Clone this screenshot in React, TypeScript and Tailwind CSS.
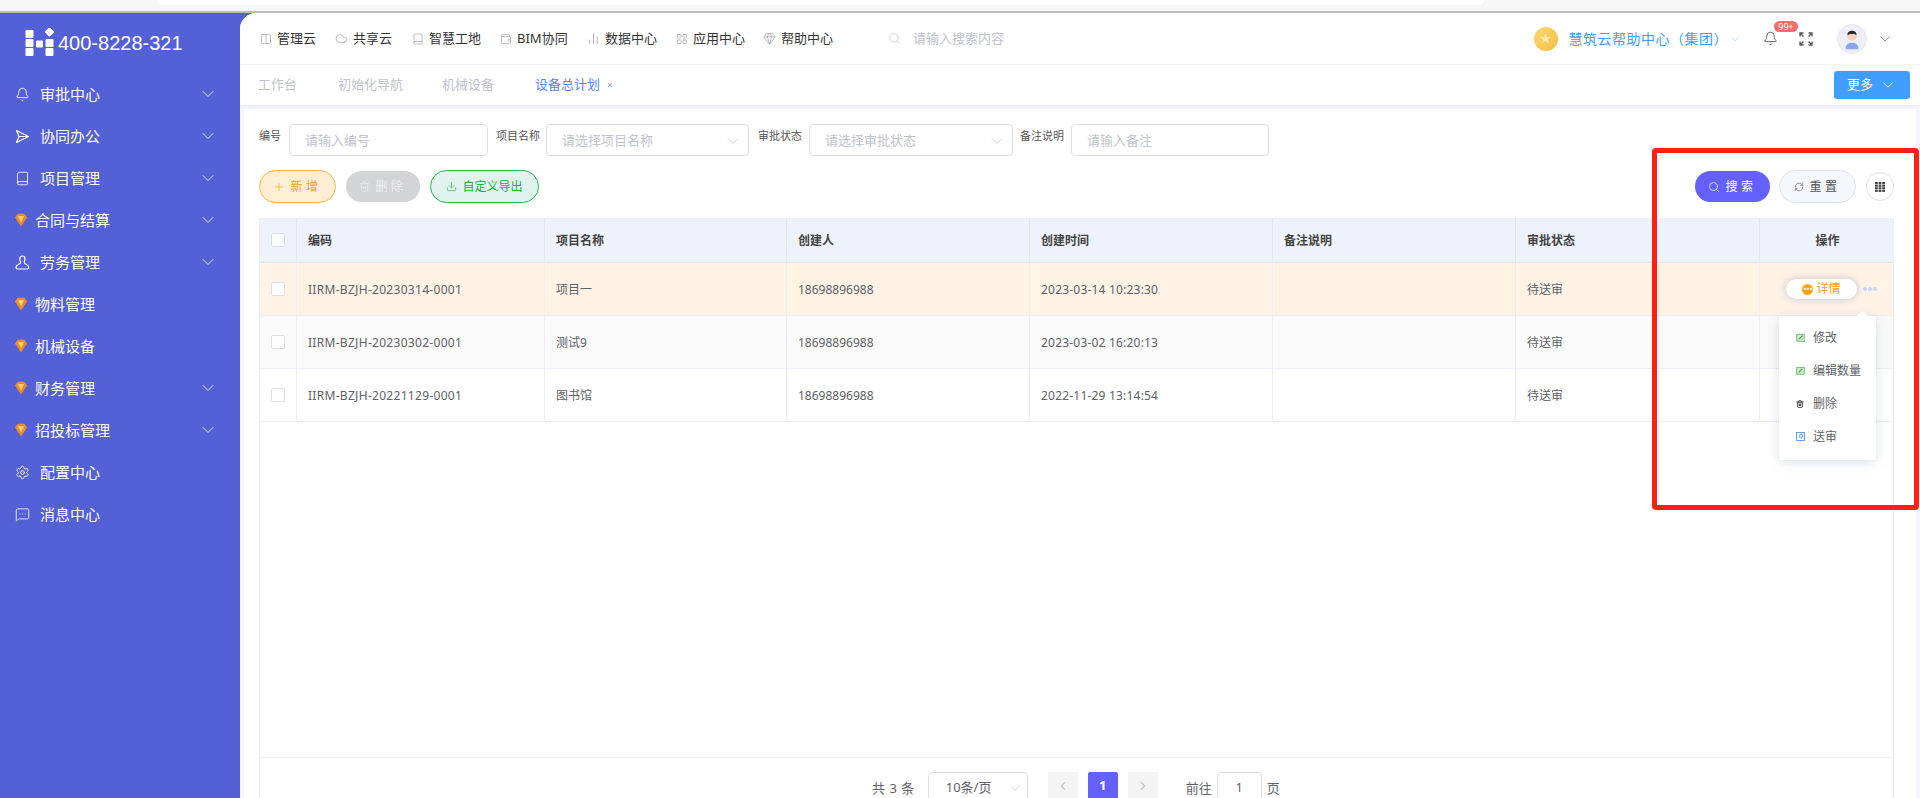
import {
  Bell,
  Book,
  ChartNoAxesColumn,
  ChevronDown,
  ChevronLeft,
  ChevronRight,
  Cloud,
  Columns2,
  Download,
  Gem,
  LayoutGrid,
  MessageSquareMore,
  Plus,
  RefreshCw,
  Search,
  Settings,
  Trash2,
  Wallet,
} from "lucide-react";
import type { ReactNode } from "react";

const FONT = "font-['Noto_Sans','Noto_Sans_CJK_SC',sans-serif]";

function GemDot() {
  return (
    <svg viewBox="0 0 12 14" className="h-[14px] w-[12px] shrink-0">
      <path d="M2.6 0.8h6.8L12 4.6 6 13.6 0 4.6z" fill="#f5882a" />
      <path d="M3 3h6L6 9.6z" fill="#ffd768" />
    </svg>
  );
}

function Logo() {
  return (
    <svg viewBox="0 0 30 30" className="h-[30px] w-[30px] shrink-0" fill="#fff">
      <rect x="0.5" y="2" width="8" height="8" rx="1" />
      <rect x="0.5" y="11" width="8" height="8" rx="1" />
      <rect x="0.5" y="20" width="8" height="8" rx="1" />
      <rect x="11" y="12.5" width="7" height="7" rx="1" />
      <rect x="20.5" y="11" width="8" height="8" rx="1" />
      <rect x="20.5" y="20" width="8" height="8" rx="1" />
      <rect x="21" y="0.5" width="7" height="7" rx="1" transform="rotate(45 24.5 4)" />
    </svg>
  );
}

function PlaneIcon() {
  return (
    <svg viewBox="0 0 15 15" className="h-[15px] w-[15px]" fill="none" stroke="currentColor" strokeWidth="1.2" strokeLinejoin="round">
      <path d="M1.500 1.500L13.500 7.500L1.500 13.500L4 7.500ZM4 7.500H13.500" />
    </svg>
  );
}

function WorkerIcon() {
  return (
    <svg viewBox="0 0 15 15" className="h-[15px] w-[15px]" fill="none" stroke="currentColor" strokeWidth="1.2" strokeLinejoin="round">
      <path d="M4.800 3.800C4.800 2 6 1 7.400 1S10 2 10 3.800C10 5.500 9.200 6.400 9.200 7.600C9.200 9 13.800 9.600 13.800 12.200C13.800 13.300 13 14 12 14H2.800C1.800 14 1 13.300 1 12.200C1 9.600 5.600 9 5.600 7.600C5.600 6.400 4.800 5.500 4.800 3.800Z" />
    </svg>
  );
}

const menu: { label: string; icon: ReactNode; gem?: boolean; arrow?: boolean }[] = [
  { label: "审批中心", icon: <Bell size={15} strokeWidth={1.3} />, arrow: true },
  { label: "协同办公", icon: <PlaneIcon />, arrow: true },
  { label: "项目管理", icon: <Book size={15} strokeWidth={1.3} />, arrow: true },
  { label: "合同与结算", icon: <GemDot />, gem: true, arrow: true },
  { label: "劳务管理", icon: <WorkerIcon />, arrow: true },
  { label: "物料管理", icon: <GemDot />, gem: true },
  { label: "机械设备", icon: <GemDot />, gem: true },
  { label: "财务管理", icon: <GemDot />, gem: true, arrow: true },
  { label: "招投标管理", icon: <GemDot />, gem: true, arrow: true },
  { label: "配置中心", icon: <Settings size={15} strokeWidth={1.3} /> },
  { label: "消息中心", icon: <MessageSquareMore size={15} strokeWidth={1.3} /> },
];

function Sidebar() {
  return (
    <aside className="w-[240px] shrink-0 text-white">
      <div className="flex h-[60px] items-center pl-[25px]">
        <Logo />
        <span className="ml-[3px] font-['Liberation_Sans',sans-serif] text-[20px]">400-8228-321</span>
      </div>
      <nav>
        {menu.map((m) => (
          <div key={m.label} className="flex h-[42px] items-center pl-[15px] pr-[22px] text-[15px]">
            <span className={`flex justify-start ${m.gem ? "w-[20px]" : "w-[25px]"}`}>{m.icon}</span>
            <span className="flex-1">{m.label}</span>
            {m.arrow ? <ChevronDown size={20} strokeWidth={1} /> : null}
          </div>
        ))}
      </nav>
    </aside>
  );
}

const topLinks: { label: string; icon: ReactNode; width: string }[] = [
  { label: "管理云", icon: <Columns2 size={12} strokeWidth={1.2} />, width: "w-[75px]" },
  { label: "共享云", icon: <Cloud size={13} strokeWidth={1.2} />, width: "w-[77px]" },
  { label: "智慧工地", icon: <Book size={12} strokeWidth={1.2} />, width: "w-[88px]" },
  { label: "BIM协同", icon: <Wallet size={12} strokeWidth={1.2} />, width: "w-[87px]" },
  { label: "数据中心", icon: <ChartNoAxesColumn size={13} strokeWidth={1.4} />, width: "w-[89px]" },
  { label: "应用中心", icon: <LayoutGrid size={12} strokeWidth={1.2} />, width: "w-[87px]" },
  { label: "帮助中心", icon: <Gem size={13} strokeWidth={1.2} />, width: "w-[87px]" },
];

function TopBar() {
  return (
    <header className="flex h-[52px] items-center border-b border-[#f0f1f4] pl-[20px] pr-[27px]">
      {topLinks.map((l) => (
        <div key={l.label} className={`flex items-center gap-[5px] text-[13px] text-[#333] ${l.width}`}>
          <span className="text-[#999]">{l.icon}</span>
          {l.label}
        </div>
      ))}
      <Search size={13} strokeWidth={1.3} className="ml-[38px] text-[#c0c4cc]" />
      <span className="ml-[12px] text-[13px] text-[#c0c4cc]">请输入搜索内容</span>
      <div className="ml-auto flex items-center">
        <span className="flex h-[24px] w-[24px] items-center justify-center rounded-full bg-gradient-to-br from-[#fbd86a] to-[#f4bd4c] text-[12px] text-[#ffe9a8]">★</span>
        <span className="ml-[11px] text-[14px] tracking-[0.5px] text-[#409eff]">慧筑云帮助中心（集团）</span>
        <ChevronDown size={14} strokeWidth={1.2} className="text-[#a9bff0]" />
        <span className="relative ml-[21px]">
          <Bell size={15} strokeWidth={1.2} className="text-[#333]" />
          <span className="absolute left-[11px] top-[-10px] flex h-[11px] w-[24px] items-center justify-center rounded-full bg-[#f56c6c] text-[9px] leading-none text-white">99+</span>
        </span>
        <svg viewBox="0 0 14 14" className="ml-[21px] h-[14px] w-[14px]" fill="none" stroke="#555" strokeWidth="1.3">
          <path d="M1 4.500V1h3.500M9.500 1H13v3.500M13 9.500V13H9.500M4.500 13H1V9.500M1.500 1.500l3 3M12.500 1.500l-3 3M12.500 12.500l-3-3M1.500 12.500l3-3" />
        </svg>
        <span className="ml-[24px] flex h-[30px] w-[30px] items-center justify-center overflow-hidden rounded-full border border-[#e8e8ee] bg-[#edf0f8]">
          <svg viewBox="0 0 28 28" className="h-[26px] w-[26px]">
            <circle cx="14" cy="11" r="5" fill="#f5d3bd" />
            <path d="M9 10c0-4 2.500-5 5-5s5 1 5 5c-1.500-2-8-2-10 0z" fill="#2b2b33" />
            <path d="M7 25c0-5 3-7 7-7s7 2 7 7z" fill="#8da4ee" />
          </svg>
        </span>
        <ChevronDown size={16} strokeWidth={1} className="ml-[10px] text-[#555]" />
      </div>
    </header>
  );
}

function Tabs() {
  return (
    <div className="flex h-[40px] items-center bg-white pl-[18px] pr-[10px] text-[13px] text-[#c0c4cc] shadow-[0_1px_2px_rgba(0,0,0,0.05)]">
      <span className="w-[80px]">工作台</span>
      <span className="w-[104px]">初始化导航</span>
      <span className="w-[93px]">机械设备</span>
      <span className="text-[#5b82f7]">设备总计划</span>
      <span className="ml-[7px] text-[10px] text-[#8aa0f5]">×</span>
      <button className="ml-auto flex h-[28px] w-[76px] items-center justify-center gap-[6px] rounded-[3px] bg-[#409eff] text-[13px] text-white">
        更多
        <ChevronDown size={18} strokeWidth={1.2} />
      </button>
    </div>
  );
}

function Field({ label, placeholder, select, labelClass, fieldClass }: { label: string; placeholder: string; select?: boolean; labelClass: string; fieldClass: string }) {
  return (
    <>
      <span className={`self-start whitespace-nowrap pt-[4px] text-[11px] leading-[16px] text-[#555] ${labelClass}`}>{label}</span>
      <div className={`flex h-[32px] items-center rounded-[4px] border border-[#dcdfe6] bg-white pl-[15px] pr-[5px] pt-px text-[13px] text-[#c0c4cc] ${fieldClass}`}>
        <span className="flex-1">{placeholder}</span>
        {select ? <ChevronDown size={20} strokeWidth={1} /> : null}
      </div>
    </>
  );
}

const columns = ["编码", "项目名称", "创建人", "创建时间", "备注说明", "审批状态"];

const rows = [
  { code: "IIRM-BZJH-20230314-0001", name: "项目一", time: "2023-03-14 10:23:30", bg: "bg-[#fff3e6]" },
  { code: "IIRM-BZJH-20230302-0001", name: "测试9", time: "2023-03-02 16:20:13", bg: "bg-[#fafafa]" },
  { code: "IIRM-BZJH-20221129-0001", name: "图书馆", time: "2022-11-29 13:14:54", bg: "bg-white" },
];

const GRID = "grid grid-cols-[37px_248px_242px_243px_243px_243px_244px_135px]";

function Checkbox() {
  return <span className="block h-[14px] w-[14px] rounded-[2px] border border-[#dcdfe6] bg-white" />;
}

function DataTable() {
  return (
    <div className="mx-[15px] mt-[15px] flex h-[539px] w-[1635px] flex-col border-x border-[#ebeef5]">
      <div className={`${GRID} h-[45px] border-b border-[#e4e7ed] bg-[#eef2fb] text-[12px] font-bold text-[#444]`}>
        <div className="flex items-center justify-center border-r border-[#e4e7ed]">
          <Checkbox />
        </div>
        {columns.map((c) => (
          <div key={c} className="flex items-center border-r border-[#e4e7ed] pl-[11px] pt-px">
            {c}
          </div>
        ))}
        <div className="flex items-center justify-center pt-px">操作</div>
      </div>
      {rows.map((r, i) => (
        <div key={r.code} className={`${GRID} h-[53px] border-b border-[#ebeef5] text-[12px] text-[#606266] ${r.bg}`}>
          <div className="flex items-center justify-center border-r border-[#ebeef5]">
            <Checkbox />
          </div>
          <div className="flex items-center border-r border-[#ebeef5] pl-[11px] pt-px tracking-[0.3px]">{r.code}</div>
          <div className="flex items-center border-r border-[#ebeef5] pl-[11px] pt-px">{r.name}</div>
          <div className="flex items-center border-r border-[#ebeef5] pl-[11px] pt-px">18698896988</div>
          <div className="flex items-center border-r border-[#ebeef5] pl-[11px] pt-px tracking-[0.2px]">{r.time}</div>
          <div className="flex items-center border-r border-[#ebeef5] pl-[11px]" />
          <div className="flex items-center border-r border-[#ebeef5] pl-[11px] pt-px">待送审</div>
          <div className="relative flex items-center">
            {i === 0 ? <RowActions /> : null}
          </div>
        </div>
      ))}
    </div>
  );
}

function RowActions() {
  return (
    <>
      <button className="ml-[26px] flex h-[20px] w-[71px] items-center justify-center gap-[3px] rounded-full bg-white text-[12px] text-[#ff9a0a] shadow-[0_0_8px_rgba(110,120,180,0.4)]">
        <span className="flex h-[11px] w-[11px] items-center justify-center rounded-full bg-[#ffa30f] text-[8px] leading-none text-white">
          •••
        </span>
        详情
      </button>
      <span className="ml-[6px] flex gap-[1.5px]">
        <i className="h-[3.500px] w-[3.500px] rounded-full bg-[#c6d4f6]" />
        <i className="h-[3.500px] w-[3.500px] rounded-full bg-[#c6d4f6]" />
        <i className="h-[3.500px] w-[3.500px] rounded-full bg-[#c6d4f6]" />
      </span>
    </>
  );
}

function EditIcon({ color }: { color: string }) {
  return (
    <svg viewBox="0 0 10 10" className="h-[9px] w-[9px]" fill="none" stroke={color} strokeWidth="1.2">
      <rect x="0.8" y="1.6" width="8.4" height="7.6" fill="#d6ecd2" />
      <path d="M3 7l4-4" stroke="#3f9a4d" />
    </svg>
  );
}

const popupItems: { label: string; icon: ReactNode }[] = [
  { label: "修改", icon: <EditIcon color="#7cc37e" /> },
  { label: "编辑数量", icon: <EditIcon color="#7cc37e" /> },
  { label: "删除", icon: <Trash2 size={8} strokeWidth={2.6} className="text-[#222]" /> },
  {
    label: "送审",
    icon: (
      <svg viewBox="0 0 10 10" className="h-[9px] w-[9px]" fill="none" stroke="#5b9cf5" strokeWidth="1.1">
        <rect x="0.6" y="0.6" width="8.8" height="8.8" />
        <circle cx="5.500" cy="4.600" r="2" />
      </svg>
    ),
  },
];

function ActionPopup() {
  return (
    <div className="absolute left-[1779px] top-[316px] z-10 flex h-[144px] w-[97px] flex-col rounded-[2px] bg-white py-[5px] text-[12px] text-[#606266] shadow-[0_2px_12px_rgba(120,130,170,0.25)]">
      <span className="absolute right-[8px] top-[-5px] h-0 w-0 border-x-[6px] border-b-[5px] border-x-transparent border-b-white" />
      {popupItems.map((p) => (
        <div key={p.label} className="flex h-[33px] items-center pl-[17px]">
          <span className="flex w-[17px] justify-start">{p.icon}</span>
          {p.label}
        </div>
      ))}
    </div>
  );
}

function Pagination() {
  return (
    <div className="mx-[15px] flex h-[41px] w-[1635px] border-x border-t border-[#ebeef5] pl-[612px] pt-[14px] text-[13px] text-[#606266]">
      <span className="leading-[32px] tracking-[0.5px]">共 3 条</span>
      <div className="ml-[13px] flex h-[32px] w-[100px] items-center rounded-[4px] border border-[#dcdfe6] pl-[17px] pr-[3px]">
        <span className="flex-1">10条/页</span>
        <ChevronDown size={18} strokeWidth={1} className="text-[#c0c4cc]" />
      </div>
      <span className="ml-[20px] flex h-[28px] w-[30px] items-center justify-center rounded-[2px] bg-[#f4f4f5] text-[#c0c4cc]">
        <ChevronLeft size={14} strokeWidth={2} />
      </span>
      <span className="ml-[10px] flex h-[28px] w-[30px] items-center justify-center rounded-[2px] bg-[#6460fd] font-bold text-white">1</span>
      <span className="ml-[10px] flex h-[28px] w-[30px] items-center justify-center rounded-[2px] bg-[#f4f4f5] text-[#c0c4cc]">
        <ChevronRight size={14} strokeWidth={2} />
      </span>
      <span className="ml-[28px] leading-[32px]">前往</span>
      <span className="ml-[5px] flex h-[32px] w-[45px] items-center justify-center rounded-[4px] border border-[#dcdfe6]">1</span>
      <span className="ml-[5px] leading-[32px]">页</span>
    </div>
  );
}

function DotsGrid() {
  return (
    <svg viewBox="0 0 10 10" className="h-[10px] w-[10px]" fill="#444">
      {[0, 2.6, 5.2, 7.8].map((y) =>
        [0, 3.6, 7.2].map((x) => <rect key={`${x}-${y}`} x={x} y={y} width="2.8" height="2.1" />),
      )}
    </svg>
  );
}

function Toolbar() {
  return (
    <div className="mt-[14px] flex h-[33px] items-center pl-[15px] pr-[22px] text-[12px]">
      <button className="flex h-[33px] w-[77px] items-center justify-center gap-[5px] rounded-full border border-[#f9b64a] bg-[#ffedd4] tracking-[3.5px] text-[#f5a623]">
        <Plus size={12} strokeWidth={1.4} />
        新增
      </button>
      <button className="ml-[10px] flex h-[31px] w-[74px] items-center justify-center gap-[5px] rounded-full bg-[#d3d4d6] tracking-[3.5px] text-[#eeeeef]">
        <Trash2 size={11} strokeWidth={1.4} />
        删除
      </button>
      <button className="ml-[10px] flex h-[33px] w-[109px] items-center justify-center gap-[5px] rounded-full border border-[#2db24a] bg-[#e0f3ee] text-[#21b13b]">
        <Download size={11} strokeWidth={1.4} />
        自定义导出
      </button>
      <button className="ml-auto flex h-[31px] w-[75px] items-center justify-center gap-[5px] rounded-full bg-[#6460fd] tracking-[3.5px] text-white">
        <Search size={12} strokeWidth={1.4} />
        搜索
      </button>
      <button className="ml-[9px] flex h-[33px] w-[77px] items-center justify-center gap-[5px] rounded-full border border-[#dfe3ec] bg-[#f4f7fc] tracking-[3.5px] text-[#555]">
        <RefreshCw size={10} strokeWidth={1.4} />
        重置
      </button>
      <button className="ml-[10px] flex h-[29px] w-[28px] items-center justify-center rounded-full border border-[#dcdfe6] bg-white">
        <DotsGrid />
      </button>
    </div>
  );
}

export default function App() {
  return (
    <div className={`relative h-[798px] w-[1920px] overflow-hidden bg-[#5460d6] ${FONT}`}>
      <div className="h-[11px] bg-[#f6f6f6]">
        <div className="ml-[157px] h-[5px] w-[1327px] rounded-b-[8px] bg-white" />
      </div>
      <div className="h-[2px] bg-[#bdbdbd]" />
      <div className="flex h-[785px]">
        <Sidebar />
        <main className="flex flex-1 flex-col overflow-hidden rounded-tl-[16px] bg-[#f3f5fa]">
          <div className="bg-white">
            <TopBar />
            <Tabs />
          </div>
          <section className="mx-[4px] mt-[4px] flex-1 bg-white">
            <div className="mt-[15px] flex h-[32px] items-center pl-[15px]">
              <Field label="编号" placeholder="请输入编号" labelClass="w-[30px]" fieldClass="w-[199px]" />
              <Field label="项目名称" placeholder="请选择项目名称" select labelClass="w-[58px] pl-[8px]" fieldClass="w-[203px]" />
              <Field label="审批状态" placeholder="请选择审批状态" select labelClass="w-[60px] pl-[9px]" fieldClass="w-[204px]" />
              <Field label="备注说明" placeholder="请输入备注" labelClass="w-[58px] pl-[7px]" fieldClass="w-[198px]" />
            </div>
            <Toolbar />
            <DataTable />
            <Pagination />
          </section>
        </main>
      </div>
      <ActionPopup />
      <div className="pointer-events-none absolute left-[1652px] top-[148px] z-20 h-[362px] w-[267px] rounded-[4px] border-[5px] border-[#ff2013]" />
    </div>
  );
}
